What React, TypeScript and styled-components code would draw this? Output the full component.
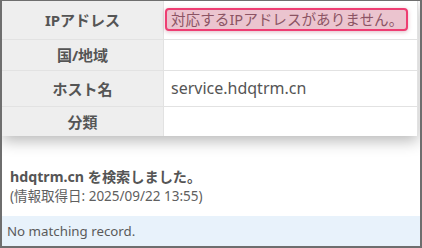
import React from 'react';
import styled, { createGlobalStyle } from 'styled-components';

const GlobalStyle = createGlobalStyle`
  html, body {
    margin: 0;
    padding: 0;
    background: #ffffff;
  }
  body {
    font-family: "Noto Sans", "Noto Sans CJK JP", sans-serif;
    color: #555555;
  }
`;

const Frame = styled.div`
  box-sizing: border-box;
  width: 422px;
  height: 248px;
  border: 2px solid #6e6e6e;
  border-top-width: 1px;
  background: #ffffff;
  display: flex;
  flex-direction: column;
  overflow: hidden;
`;

const InfoTable = styled.table`
  width: calc(100% - 2px);
  border-collapse: collapse;
  table-layout: fixed;
  box-shadow: 0 5px 14px rgba(0, 0, 0, 0.28);
  border-right: 1px solid #e2e2e2;
`;

const Row = styled.tr<{ $height: number }>`
  height: ${(p) => p.$height}px;

  &:not(:last-child) > * {
    border-bottom: 1px solid #e2e2e2;
  }
`;

const Label = styled.th`
  width: 161px;
  padding: 0;
  background: #eeeeee;
  border-right: 1px solid #e2e2e2;
  font-size: 15px;
  font-weight: 700;
  color: #555555;
  text-align: center;
  vertical-align: middle;
`;

const Value = styled.td`
  padding: 0 0 0 7px;
  font-size: 16px;
  color: #555555;
  vertical-align: middle;
  white-space: nowrap;
`;

const Alert = styled.span`
  display: inline-block;
  box-sizing: border-box;
  height: 23px;
  line-height: 19px;
  padding: 0 3px 0 4px;
  margin-left: -6px;
  background: #ebc4cf;
  border: 2px solid #ee3d72;
  border-radius: 4px;
  box-shadow: 0 1px 4px rgba(160, 60, 90, 0.35);
  font-size: 14.6px;
  color: #8c5464;
`;

const Summary = styled.div`
  padding: 31px 8px 0 8px;
  flex: 1;
`;

const Headline = styled.div`
  font-size: 14.2px;
  font-weight: 700;
  line-height: 20px;
  color: #555555;
`;

const Fetched = styled.div`
  font-size: 13.5px;
  line-height: 19px;
  color: #606060;
`;

const ResultBar = styled.div`
  height: 30px;
  display: flex;
  align-items: center;
  padding-left: 5px;
  background: #e8f2fb;
  font-size: 13.3px;
  color: #5a5a5a;
`;

const rows: { label: string; value: React.ReactNode; height: number }[] = [
  { label: 'IPアドレス', value: <Alert>対応するIPアドレスがありません。</Alert>, height: 38 },
  { label: '国/地域', value: '', height: 31 },
  { label: 'ホスト名', value: 'service.hdqtrm.cn', height: 36 },
  { label: '分類', value: '', height: 30 },
];

export default function App() {
  return (
    <>
      <GlobalStyle />
      <Frame>
        <InfoTable>
          <tbody>
            {rows.map((r) => (
              <Row key={r.label} $height={r.height}>
                <Label>{r.label}</Label>
                <Value>{r.value}</Value>
              </Row>
            ))}
          </tbody>
        </InfoTable>
        <Summary>
          <Headline>hdqtrm.cn を検索しました。</Headline>
          <Fetched>(情報取得日: 2025/09/22 13:55)</Fetched>
        </Summary>
        <ResultBar>No matching record.</ResultBar>
      </Frame>
    </>
  );
}
